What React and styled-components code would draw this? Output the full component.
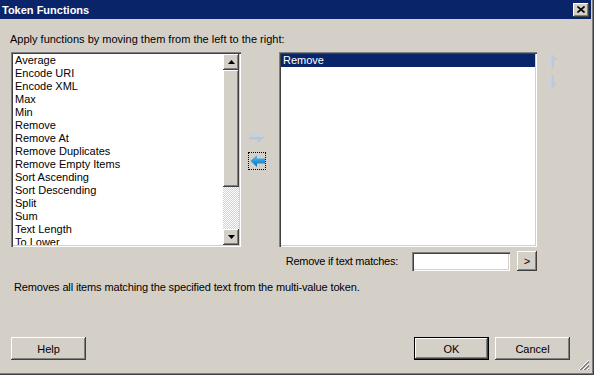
import React from "react";
import styled, { createGlobalStyle } from "styled-components";

const Global = createGlobalStyle`
  html, body { margin: 0; padding: 0; background: #D4D0C8; }
  body { font-family: "Liberation Sans", Arial, sans-serif; font-size: 11px; color: #000; }
  * { box-sizing: border-box; }
`;

const raised = `
  background: #D4D0C8;
  box-shadow: inset -1px -1px #404040, inset 1px 1px #FFFFFF, inset -2px -2px #808080, inset 2px 2px #D4D0C8;
`;

const sunken = `
  background: #FFFFFF;
  box-shadow: inset 1px 1px #808080, inset 2px 2px #404040, inset -1px -1px #FFFFFF, inset -2px -2px #D4D0C8;
  padding: 2px;
`;

const Window = styled.div`
  position: relative;
  width: 594px;
  height: 375px;
  background: #D4D0C8;
  display: flex;
  flex-direction: column;
  padding: 0 3px 3px 0;
  box-shadow: inset -1px -1px #404040, inset -2px -2px #808080;
  overflow: hidden;
`;

const TitleBar = styled.div`
  height: 19px;
  flex: none;
  background: #0A246A;
  color: #FFFFFF;
  font-weight: bold;
  font-size: 11px;
  display: flex;
  align-items: center;
  justify-content: space-between;
  padding: 0 2px 0 2px;
`;

const CloseButton = styled.div`
  ${raised}
  width: 16px;
  height: 14px;
  display: flex;
  align-items: center;
  justify-content: center;
`;

const Label = styled.div`
  margin: 14px 0 0 10px;
  line-height: 13px;
  white-space: nowrap;
`;

const ListsRow = styled.div`
  display: flex;
  margin-top: 6px;
  padding-left: 11px;
  height: 195px;
`;

const ListBox = styled.div`
  ${sunken}
  width: ${(p) => p.$w}px;
  height: 100%;
  display: flex;
  overflow: hidden;
`;

const Items = styled.div`
  flex: 1;
  overflow: hidden;
  display: flex;
  flex-direction: column;
`;

const Item = styled.div`
  flex: none;
  height: 13px;
  line-height: 13px;
  padding-left: 2px;
  white-space: nowrap;
  background: ${(p) => (p.$sel ? "#0A246A" : "transparent")};
  color: ${(p) => (p.$sel ? "#FFFFFF" : "#000000")};
`;

const ScrollBar = styled.div`
  width: 16px;
  flex: none;
  display: flex;
  flex-direction: column;
`;

const ScrollBtn = styled.div`
  ${raised}
  width: 16px;
  height: 16px;
  flex: none;
  display: flex;
  align-items: center;
  justify-content: center;
`;

const Thumb = styled.div`
  ${raised}
  height: 117px;
  flex: none;
`;

const Track = styled.div`
  flex: 1;
  background-color: #FFFFFF;
  background-image: conic-gradient(#D4D0C8 25%, #FFFFFF 0 50%, #D4D0C8 0 75%, #FFFFFF 0);
  background-size: 2px 2px;
`;

const MidCol = styled.div`
  width: 18px;
  margin-left: 7px;
  display: flex;
  flex-direction: column;
  align-items: center;
  justify-content: center;
  gap: 6px;
  padding-bottom: 2px;
`;

const IconSlot = styled.div`
  width: 18px;
  height: 18px;
  display: flex;
  align-items: center;
  justify-content: center;
  outline: ${(p) => (p.$focus ? "1px dotted #000" : "none")};
  outline-offset: -1px;
`;

const RightWrap = styled.div`
  margin-left: 13px;
  height: 100%;
`;

const OrderCol = styled.div`
  margin-left: 7px;
  width: 15px;
  display: flex;
  flex-direction: column;
  align-items: center;
  gap: 7px;
  padding-top: 1px;
`;

const MatchRow = styled.div`
  width: 537px;
  margin-top: 4px;
  height: 20px;
  display: flex;
  align-items: center;
  justify-content: flex-end;
`;

const MatchLabel = styled.span`
  margin-right: 14px;
  white-space: nowrap;
  letter-spacing: -0.25px;
`;

const TextBox = styled.div`
  ${sunken}
  width: 98px;
  height: 19px;
  margin-right: 7px;
`;

const SmallBtn = styled.div`
  ${raised}
  width: 20px;
  height: 20px;
  display: flex;
  align-items: center;
  justify-content: center;
  font-size: 11px;
  padding-bottom: 1px;
`;

const Description = styled.div`
  margin: 10px 0 0 14px;
  line-height: 13px;
  white-space: nowrap;
  letter-spacing: -0.14px;
`;

const ButtonRow = styled.div`
  margin-top: auto;
  margin-bottom: 12px;
  display: flex;
  align-items: center;
  padding: 0 21px 0 11px;
`;

const Spacer = styled.div`
  flex: 1;
`;

const DlgButton = styled.div`
  ${raised}
  width: 75px;
  height: 23px;
  display: flex;
  align-items: center;
  justify-content: center;
  margin-left: ${(p) => p.$ml || 0}px;
  ${(p) =>
    p.$default &&
    `box-shadow: inset 0 0 0 1px #000000, inset -2px -2px #404040, inset 2px 2px #FFFFFF, inset -3px -3px #808080;`}
`;

const Grip = styled.svg`
  position: absolute;
  right: 4px;
  bottom: 4px;
`;

const leftItems = [
  "Average",
  "Encode URI",
  "Encode XML",
  "Max",
  "Min",
  "Remove",
  "Remove At",
  "Remove Duplicates",
  "Remove Empty Items",
  "Sort Ascending",
  "Sort Descending",
  "Split",
  "Sum",
  "Text Length",
  "To Lower",
];

const Tri = ({ down }) => (
  <svg width="7" height="4" viewBox="0 0 7 4">
    <path d={down ? "M0 0H7L3.5 4Z" : "M3.5 0L7 4H0Z"} fill="#000" />
  </svg>
);

export default function App() {
  return (
    <>
      <Global />
      <Window>
        <TitleBar>
          <span>Token Functions</span>
          <CloseButton>
            <svg width="8" height="7" viewBox="0 0 8 7">
              <path d="M0.5 0.5L7.5 6.5M7.5 0.5L0.5 6.5" stroke="#000" strokeWidth="1.6" />
            </svg>
          </CloseButton>
        </TitleBar>
        <Label>Apply functions by moving them from the left to the right:</Label>
        <ListsRow>
          <ListBox $w={230}>
            <Items>
              {leftItems.map((t) => (
                <Item key={t}>{t}</Item>
              ))}
            </Items>
            <ScrollBar>
              <ScrollBtn>
                <Tri />
              </ScrollBtn>
              <Thumb />
              <Track />
              <ScrollBtn>
                <Tri down />
              </ScrollBtn>
            </ScrollBar>
          </ListBox>
          <MidCol>
            <IconSlot>
              <svg width="16" height="12" viewBox="0 0 16 12">
                <path d="M0.5 3.5H8.5V0L15.5 6L8.5 12V8.5H0.5Z" fill="#B9C5D5" />
                <path d="M0.5 3.5H8.5V0L15.5 6H0.5Z" fill="#C8D2DE" />
              </svg>
            </IconSlot>
            <IconSlot $focus>
              <svg width="15" height="12" viewBox="0 0 15 12">
                <defs>
                  <linearGradient id="lg" x1="0" y1="0" x2="0" y2="1">
                    <stop offset="0" stopColor="#62C4F2" />
                    <stop offset="0.5" stopColor="#2A98DC" />
                    <stop offset="1" stopColor="#0A66B0" />
                  </linearGradient>
                </defs>
                <path d="M15 3.5H7V0L0.5 6L7 12V8.5H15Z" fill="url(#lg)" />
              </svg>
            </IconSlot>
          </MidCol>
          <RightWrap>
            <ListBox $w={258}>
              <Items>
                <Item $sel>Remove</Item>
              </Items>
            </ListBox>
          </RightWrap>
          <OrderCol>
            <svg width="13" height="15" viewBox="0 0 13 15">
              <path d="M4 15V7H0.5L6.5 0.5L12.5 7H9V15Z" fill="#BFC8D5" />
              <path d="M4 15V7H0.5L6.5 0.5V15Z" fill="#CAD2DE" />
            </svg>
            <svg width="13" height="15" viewBox="0 0 13 15">
              <path d="M4 0V8H0.5L6.5 14.5L12.5 8H9V0Z" fill="#BFC8D5" />
              <path d="M4 0V8H0.5L6.5 14.5V0Z" fill="#CAD2DE" />
            </svg>
          </OrderCol>
        </ListsRow>
        <MatchRow>
          <MatchLabel>Remove if text matches:</MatchLabel>
          <TextBox />
          <SmallBtn>&gt;</SmallBtn>
        </MatchRow>
        <Description>
          Removes all items matching the specified text from the multi-value token.
        </Description>
        <ButtonRow>
          <DlgButton>Help</DlgButton>
          <Spacer />
          <DlgButton $default>OK</DlgButton>
          <DlgButton $ml={6}>Cancel</DlgButton>
        </ButtonRow>
        <Grip width="12" height="12" viewBox="0 0 12 12">
          <path d="M11 1L1 11M11 5L5 11M11 9L9 11" stroke="#FFFFFF" strokeWidth="1" />
          <path d="M11 2L2 11M11 3L3 11M11 6L6 11M11 7L7 11M11 10L10 11" stroke="#808080" strokeWidth="1" />
        </Grip>
      </Window>
    </>
  );
}
